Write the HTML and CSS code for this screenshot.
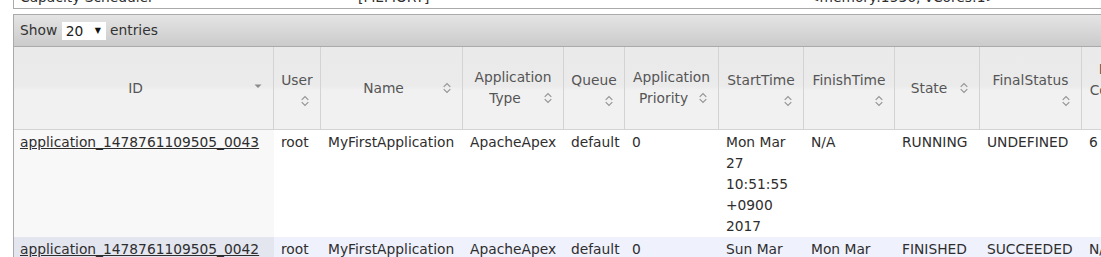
FILE: index.html
```html
<!DOCTYPE html>
<html>
<head>
<meta charset="utf-8">
<link rel="stylesheet" href="styles.css">
</head>
<body>
<div class="prev">
  <div class="prev-row">
    <div class="pc pc1">Capacity Scheduler</div>
    <div class="pc pc2">[MEMORY]</div>
    <div class="pc pc3">&lt;memory:1536, vCores:1&gt;</div>
  </div>
</div>
<div class="wrapper">
  <div class="toolbar">
    <span>Show</span>
    <span class="sel"><span class="sel-val">20</span><span class="sel-arrow">&#9660;</span></span>
    <span>entries</span>
  </div>
  <table class="apps">
    <colgroup>
      <col class="c-id"><col class="c-user"><col class="c-name"><col class="c-type"><col class="c-queue"><col class="c-prio"><col class="c-start"><col class="c-finish"><col class="c-state"><col class="c-final"><col class="c-run">
    </colgroup>
    <thead>
      <tr>
        <th>ID<span class="ico"><svg width="16" height="16" viewBox="0 0 16 16"><polygon points="4.5,6.5 11.5,6.5 8,10" fill="#8a8a8a"/></svg></span></th>
        <th>User<span class="ico"><svg width="16" height="16" viewBox="0 0 16 16"><path d="M4.7 8.8 L8 5.5 L11.3 8.8 M4.7 11.2 L8 14.5 L11.3 11.2" fill="none" stroke="#959595" stroke-width="1.2"/></svg></span></th>
        <th>Name<span class="ico"><svg width="16" height="16" viewBox="0 0 16 16"><path d="M4.7 8.8 L8 5.5 L11.3 8.8 M4.7 11.2 L8 14.5 L11.3 11.2" fill="none" stroke="#959595" stroke-width="1.2"/></svg></span></th>
        <th>Application Type<span class="ico"><svg width="16" height="16" viewBox="0 0 16 16"><path d="M4.7 8.8 L8 5.5 L11.3 8.8 M4.7 11.2 L8 14.5 L11.3 11.2" fill="none" stroke="#959595" stroke-width="1.2"/></svg></span></th>
        <th>Queue<span class="ico"><svg width="16" height="16" viewBox="0 0 16 16"><path d="M4.7 8.8 L8 5.5 L11.3 8.8 M4.7 11.2 L8 14.5 L11.3 11.2" fill="none" stroke="#959595" stroke-width="1.2"/></svg></span></th>
        <th>Application Priority<span class="ico"><svg width="16" height="16" viewBox="0 0 16 16"><path d="M4.7 8.8 L8 5.5 L11.3 8.8 M4.7 11.2 L8 14.5 L11.3 11.2" fill="none" stroke="#959595" stroke-width="1.2"/></svg></span></th>
        <th>StartTime<span class="ico"><svg width="16" height="16" viewBox="0 0 16 16"><path d="M4.7 8.8 L8 5.5 L11.3 8.8 M4.7 11.2 L8 14.5 L11.3 11.2" fill="none" stroke="#959595" stroke-width="1.2"/></svg></span></th>
        <th>FinishTime<span class="ico"><svg width="16" height="16" viewBox="0 0 16 16"><path d="M4.7 8.8 L8 5.5 L11.3 8.8 M4.7 11.2 L8 14.5 L11.3 11.2" fill="none" stroke="#959595" stroke-width="1.2"/></svg></span></th>
        <th>State<span class="ico"><svg width="16" height="16" viewBox="0 0 16 16"><path d="M4.7 8.8 L8 5.5 L11.3 8.8 M4.7 11.2 L8 14.5 L11.3 11.2" fill="none" stroke="#959595" stroke-width="1.2"/></svg></span></th>
        <th>FinalStatus<span class="ico"><svg width="16" height="16" viewBox="0 0 16 16"><path d="M4.7 8.8 L8 5.5 L11.3 8.8 M4.7 11.2 L8 14.5 L11.3 11.2" fill="none" stroke="#959595" stroke-width="1.2"/></svg></span></th>
        <th>Running Containers<span class="ico"><svg width="16" height="16" viewBox="0 0 16 16"><path d="M4.7 8.8 L8 5.5 L11.3 8.8 M4.7 11.2 L8 14.5 L11.3 11.2" fill="none" stroke="#959595" stroke-width="1.2"/></svg></span></th>
      </tr>
    </thead>
    <tbody>
      <tr class="even">
        <td class="sorting"><a href="#">application_1478761109505_0043</a></td>
        <td>root</td>
        <td>MyFirstApplication</td>
        <td>ApacheApex</td>
        <td>default</td>
        <td>0</td>
        <td>Mon Mar 27 10:51:55 +0900 2017</td>
        <td>N/A</td>
        <td>RUNNING</td>
        <td>UNDEFINED</td>
        <td>6</td>
      </tr>
      <tr class="odd">
        <td class="sorting"><a href="#">application_1478761109505_0042</a></td>
        <td>root</td>
        <td>MyFirstApplication</td>
        <td>ApacheApex</td>
        <td>default</td>
        <td>0</td>
        <td>Sun Mar 26 23:10:12 +0900 2017</td>
        <td>Mon Mar 27 09:12:30 +0900 2017</td>
        <td>FINISHED</td>
        <td>SUCCEEDED</td>
        <td>N/A</td>
      </tr>
    </tbody>
  </table>
</div>
</body>
</html>
```
FILE: styles.css
```css
html, body {
  margin: 0;
  padding: 0;
  background: #ffffff;
}
body {
  width: 1101px;
  height: 257px;
  overflow: hidden;
  font-family: "DejaVu Sans", Verdana, sans-serif;
  font-size: 13.8px;
  line-height: 21px;
  color: #2e2e2e;
}
.prev {
  margin-left: 13px;
  width: 1200px;
  height: 8px;
  overflow: hidden;
  border-left: 1px solid #aaaaaa;
  border-bottom: 1px solid #aaaaaa;
}
.prev-row {
  display: flex;
  margin-top: -13px;
}
.pc {
  padding: 0 6px;
  white-space: nowrap;
  flex: none;
}
.pc1 { width: 326px; }
.pc2 { width: 438px; }
.wrapper {
  margin-top: 5px;
  margin-left: 13px;
  width: 1200px;
  border-left: 1px solid #aaaaaa;
  border-top: 1px solid #aaaaaa;
}
.toolbar {
  height: 31px;
  display: flex;
  align-items: center;
  gap: 4.4px;
  padding-left: 6px;
  border-bottom: 1px solid #aaaaaa;
  background: linear-gradient(to bottom, #e4e4e4, #cbcbcb);
  color: #333333;
}
.sel {
  display: inline-flex;
  align-items: center;
  width: 44px;
  height: 18px;
  background: #ffffff;
  box-sizing: border-box;
  padding-left: 4px;
  margin-top: 1px;
  color: #222222;
}
.sel-val { width: 29px; }
.sel-arrow {
  font-size: 8px;
  line-height: 10px;
  color: #111111;
}
table.apps {
  table-layout: fixed;
  border-collapse: separate;
  border-spacing: 0;
  width: 1159px;
}
col.c-id { width: 260px; }
col.c-user { width: 47px; }
col.c-name { width: 142px; }
col.c-type { width: 101px; }
col.c-queue { width: 61px; }
col.c-prio { width: 94px; }
col.c-start { width: 85px; }
col.c-finish { width: 91px; }
col.c-state { width: 85px; }
col.c-final { width: 102px; }
col.c-run { width: 91px; }
.apps th {
  height: 83px;
  box-sizing: border-box;
  padding: 0 7px;
  font-weight: normal;
  color: #555555;
  text-align: center;
  vertical-align: middle;
  border-right: 1px solid #d3d3d3;
  border-bottom: 1px solid #d3d3d3;
  background: linear-gradient(to bottom, #eaeaea 0%, #ebebeb 48%, #f1f1f1 53%, #f1f1f1 100%);
}
.ico {
  float: right;
  width: 16px;
  height: 16px;
}
.ico svg { display: block; }
.apps td {
  padding: 2px 6px 0 7px;
  vertical-align: top;
  text-align: left;
}
.apps td.sorting { padding-left: 6px; }
.apps a { color: #2e2e2e; }
tr.even { background: #ffffff; }
tr.even td.sorting { background: #f8f8f8; }
tr.odd { background: #eff1fc; }
tr.odd td.sorting { background: #e3e5ef; }
```
